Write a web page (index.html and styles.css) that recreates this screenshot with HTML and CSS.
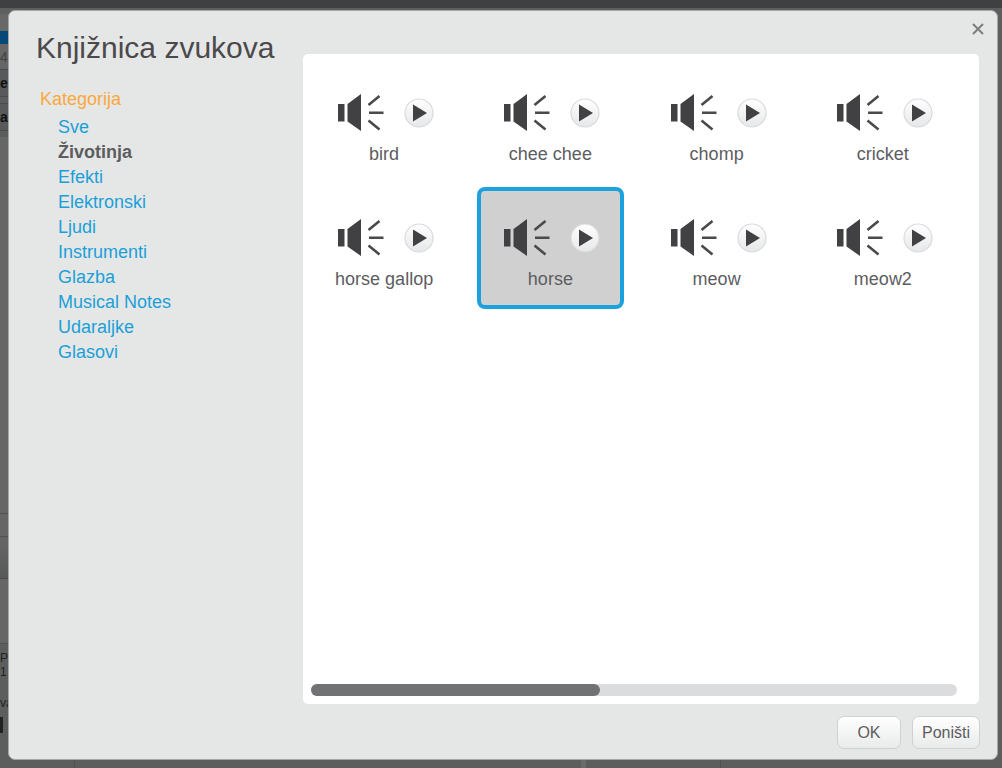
FILE: index.html
```html
<!DOCTYPE html>
<html lang="hr">
<head>
<meta charset="utf-8">
<title>Knjižnica zvukova</title>
<link rel="stylesheet" href="styles.css">
</head>
<body>
<svg class="defs" aria-hidden="true">
  <defs>
    <linearGradient id="knob" x1="0" y1="0" x2="0" y2="1"><stop offset="0" stop-color="#ffffff"/><stop offset="1" stop-color="#e6e7e8"/></linearGradient>
    <symbol id="speaker" viewBox="0 0 46 38">
      <path d="M0 10H6.500V27.500H0ZM9.500 10L23 0V37L9.500 27.500Z" fill="#414042"/>
      <path d="M30.500 11L41.500 2M31 18.700H45.500M30.500 26.500L41.500 35.500" fill="none" stroke="#4a494b" stroke-width="2.600"/>
    </symbol>
    <symbol id="play" viewBox="0 0 30 30">
      <circle cx="15" cy="15" r="14" fill="url(#knob)" stroke="#d8dadc" stroke-width="1.200"/>
      <path d="M9 6.500V23.500L23 15Z" fill="#414042"/>
    </symbol>
  </defs>
</svg>

<div class="editor" aria-hidden="true">
  <div class="topbar"></div>
  <div class="strip strip-tabs"></div>
  <div class="strip strip-blue"></div>
  <div class="strip strip-version">4</div>
  <div class="strip strip-tab">e</div>
  <div class="strip strip-tab">a</div>
  <div class="strip strip-stage"></div>
  <div class="strip strip-line"></div>
  <div class="strip strip-shade"></div>
  <div class="strip strip-sprites"></div>
  <div class="strip strip-info"><span>Po</span><span>1</span><b>va</b><i></i></div>
  <div class="footer"><span></span><span></span><span></span></div>
</div>

<section class="dialog" role="dialog" aria-labelledby="title">
  <div class="side">
    <h1 id="title">Knjižnica zvukova</h1>
    <h2>Kategorija</h2>
    <nav class="categories">
      <a href="#">Sve</a>
      <a href="#" class="current" aria-current="true">Životinja</a>
      <a href="#">Efekti</a>
      <a href="#">Elektronski</a>
      <a href="#">Ljudi</a>
      <a href="#">Instrumenti</a>
      <a href="#">Glazba</a>
      <a href="#">Musical Notes</a>
      <a href="#">Udaraljke</a>
      <a href="#">Glasovi</a>
    </nav>
  </div>
  <div class="main">
    <button class="close" aria-label="Zatvori"><svg viewBox="0 0 12 12"><path d="M1 1L11 11M11 1L1 11"/></svg></button>
    <div class="panel">
      <div class="sounds">
        <div class="sound"><div class="icons"><svg class="speaker"><use href="#speaker"/></svg><button class="play" aria-label="bird, play"><svg><use href="#play"/></svg></button></div><span>bird</span></div>
        <div class="sound"><div class="icons"><svg class="speaker"><use href="#speaker"/></svg><button class="play" aria-label="chee chee, play"><svg><use href="#play"/></svg></button></div><span>chee chee</span></div>
        <div class="sound"><div class="icons"><svg class="speaker"><use href="#speaker"/></svg><button class="play" aria-label="chomp, play"><svg><use href="#play"/></svg></button></div><span>chomp</span></div>
        <div class="sound"><div class="icons"><svg class="speaker"><use href="#speaker"/></svg><button class="play" aria-label="cricket, play"><svg><use href="#play"/></svg></button></div><span>cricket</span></div>
        <div class="sound"><div class="icons"><svg class="speaker"><use href="#speaker"/></svg><button class="play" aria-label="horse gallop, play"><svg><use href="#play"/></svg></button></div><span>horse gallop</span></div>
        <div class="sound selected"><div class="icons"><svg class="speaker"><use href="#speaker"/></svg><button class="play" aria-label="horse, play"><svg><use href="#play"/></svg></button></div><span>horse</span></div>
        <div class="sound"><div class="icons"><svg class="speaker"><use href="#speaker"/></svg><button class="play" aria-label="meow, play"><svg><use href="#play"/></svg></button></div><span>meow</span></div>
        <div class="sound"><div class="icons"><svg class="speaker"><use href="#speaker"/></svg><button class="play" aria-label="meow2, play"><svg><use href="#play"/></svg></button></div><span>meow2</span></div>
      </div>
      <div class="track"><div class="thumb" style="width:44.7%"></div></div>
    </div>
    <div class="actions">
      <button class="btn">OK</button>
      <button class="btn">Poništi</button>
    </div>
  </div>
</section>
</body>
</html>
```

FILE: styles.css
```css
* { box-sizing: border-box; }
body {
  margin: 0;
  height: 100vh;
  overflow: hidden;
  background: #5c5e5d;
  font-family: "Liberation Sans", Arial, sans-serif;
  color: #5c5d5f;
}
.defs { position: absolute; width: 0; height: 0; }
button { font-family: inherit; cursor: pointer; }

/* dimmed editor behind the dialog */
.editor { display: flex; flex-direction: column; height: 100%; }
.topbar { height: 8px; background: #3f4042; }
.strip { width: 24px; color: #222; }
.strip-tabs { height: 23px; background: linear-gradient(#5e5f5f 6px, #686868 6px); }
.strip-blue { height: 13px; background: #084877; }
.strip-version { height: 25px; background: #666; color: #414242; font-size: 14px; line-height: 26px; }
.strip-tab {
  height: 28px;
  margin-bottom: 6px;
  border: solid #484949;
  border-width: 1px 0;
  background: #58595b;
  color: #111;
  font-size: 14px;
  font-weight: bold;
  line-height: 27px;
}
.strip-stage { height: 376px; background: #666; }
.strip-line { height: 24px; border: solid #505151; border-width: 1px 0; background: #666; }
.strip-shade { height: 42px; border-bottom: 1px solid #484949; background: linear-gradient(#666, #575958); }
.strip-sprites { height: 65px; border-bottom: 1px solid #505151; background: #666; }
.strip-info { display: flex; flex-direction: column; flex: 1; padding-top: 7px; font-size: 12px; line-height: 14px; }
.strip-info b { margin: 17px 0 7px; font-weight: normal; }
.strip-info i { width: 3px; height: 16px; background: #222; }
.footer { display: grid; grid-template-columns: 75px 511px 135px; height: 8px; }
.footer span { border-right: 1px solid #505251; }
.footer span:nth-child(2) { border-right: 5px solid #6a6c6b; }

.dialog {
  position: fixed;
  inset: 10px 4px 8px 8px;
  display: grid;
  grid-template-columns: 276px 1fr;
  column-gap: 18px;
  padding: 0 18px 10px 0;
  border: 1px solid #a5a7a6;
  border-radius: 7px;
  background: #e5e7e6;
}

.side { padding: 19px 0 0 27px; }
h1 { margin: 0; font-size: 30px; font-weight: normal; line-height: 36px; color: #4b494b; white-space: nowrap; }
h2 { margin: 22px 0 5px 4px; font-size: 18px; font-weight: normal; line-height: 22px; color: #faa73f; }
.categories { display: flex; flex-direction: column; align-items: flex-start; padding-left: 22px; }
.categories a { color: #1c9fd9; font-size: 18px; line-height: 25px; text-decoration: none; }
.categories .current { color: #5c5d5f; font-weight: bold; }

.main { display: flex; flex-direction: column; min-width: 0; }
.close { align-self: flex-end; width: 24px; height: 24px; margin: 6px -11px 13px 0; padding: 6px; border: 0; background: none; }
.close svg { display: block; width: 12px; height: 12px; stroke: #7c7e7f; stroke-width: 2; }

.panel {
  display: flex;
  flex: 1;
  flex-direction: column;
  padding: 8px 22px 8px 8px;
  border-radius: 5px;
  background: #fff;
}
.sounds { display: grid; flex: 1; grid-template-columns: repeat(4, 1fr); align-content: start; gap: 3px 20px; margin-right: 1px; }
.sound {
  display: flex;
  flex-direction: column;
  align-items: center;
  height: 122px;
  padding-top: 28px;
  border: 4px solid transparent;
  border-radius: 8px;
  font-size: 18px;
  line-height: 22px;
}
.selected { border-color: #1ba2dc; background: #d0d0d0; }
.icons { display: flex; align-items: center; gap: 20px; margin-bottom: 11px; padding-left: 4px; }
.speaker { width: 46px; height: 38px; }
.play { width: 30px; height: 30px; padding: 0; border: 0; background: none; }
.play svg { display: block; width: 30px; height: 30px; }

.track { height: 12px; border-radius: 6px; background: #dbdcde; }
.thumb { height: 12px; border-radius: 6px; background: #717274; }

.actions { display: flex; justify-content: flex-end; gap: 11px; margin: 12px -1px 0 0; }
.btn {
  min-width: 64px;
  height: 33px;
  padding: 0 9px;
  border: 1px solid #cfd1d1;
  border-radius: 7px;
  background: linear-gradient(#fff, #e9eaea);
  color: #5c5d5f;
  font-size: 16px;
}
```
